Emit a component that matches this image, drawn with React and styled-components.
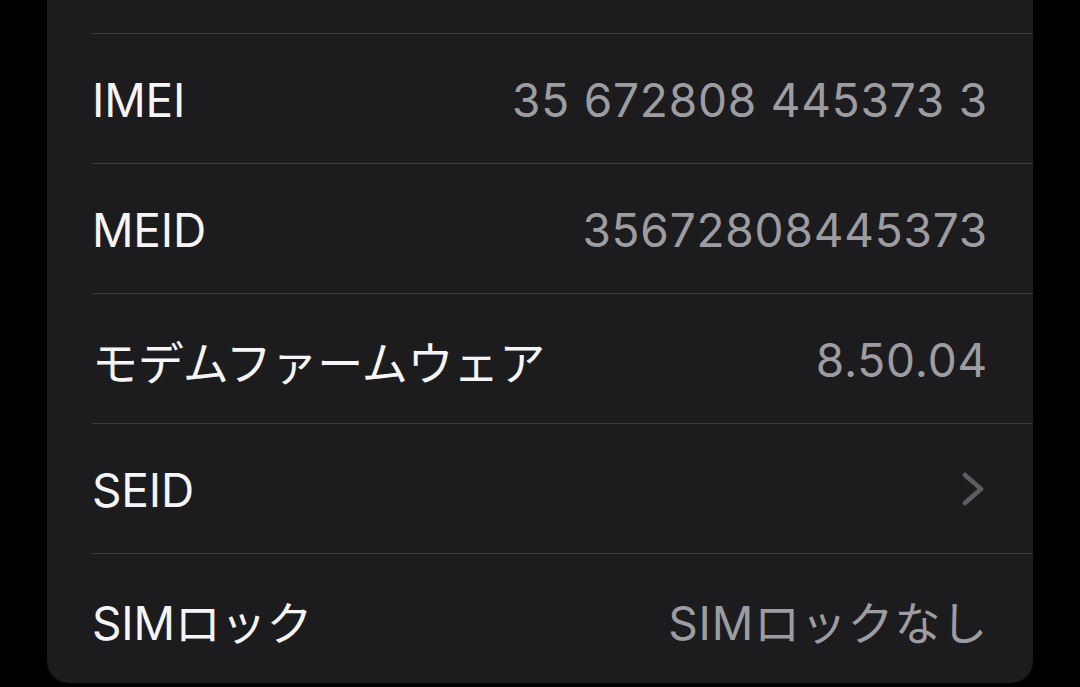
import React from "react";
import styled, { createGlobalStyle } from "styled-components";

const GlobalStyle = createGlobalStyle`
  html, body {
    margin: 0;
    padding: 0;
    background: #000;
  }
  body {
    font-family: Inter, "Noto Sans CJK JP", sans-serif;
    -webkit-font-smoothing: antialiased;
  }
`;

const Screen = styled.div`
  width: 1080px;
  height: 687px;
  overflow: hidden;
  background: #000;
  padding: 0 47px;
  box-sizing: border-box;
`;

const Card = styled.div`
  background: #1c1c1e;
  border-radius: 0 0 22px 22px;
  padding-top: 33px;
`;

const Row = styled.div`
  height: 129px;
  margin-left: 45px;
  padding-right: 46px;
  border-top: 1px solid #3a3a3d;
  display: flex;
  align-items: center;
  justify-content: space-between;
  font-size: 46px;
`;

const Label = styled.span`
  color: #f5f5f7;
  font-weight: 400;
  letter-spacing: -0.2px;
  margin-top: 3px;
`;

const Value = styled.span`
  color: #9c9ca1;
  font-weight: 400;
  letter-spacing: 0.8px;
  margin-top: 3px;
  margin-right: -1px;
`;

const Chevron = () => (
  <svg width="26" height="34" viewBox="0 0 26 34" fill="none">
    <path
      d="M4 3 L20 17 L4 31"
      stroke="#5d5d62"
      strokeWidth="4.5"
      strokeLinecap="round"
      strokeLinejoin="round"
    />
  </svg>
);

const rows = [
  { label: "IMEI", value: "35 672808 445373 3" },
  { label: "MEID", value: "35672808445373" },
  { label: "モデムファームウェア", value: "8.50.04" },
  { label: "SEID", chevron: true },
  { label: "SIMロック", value: "SIMロックなし" },
];

export default function App() {
  return (
    <>
      <GlobalStyle />
      <Screen>
        <Card>
          {rows.map((r) => (
            <Row key={r.label}>
              <Label>{r.label}</Label>
              {r.chevron ? <Chevron /> : <Value>{r.value}</Value>}
            </Row>
          ))}
        </Card>
      </Screen>
    </>
  );
}
